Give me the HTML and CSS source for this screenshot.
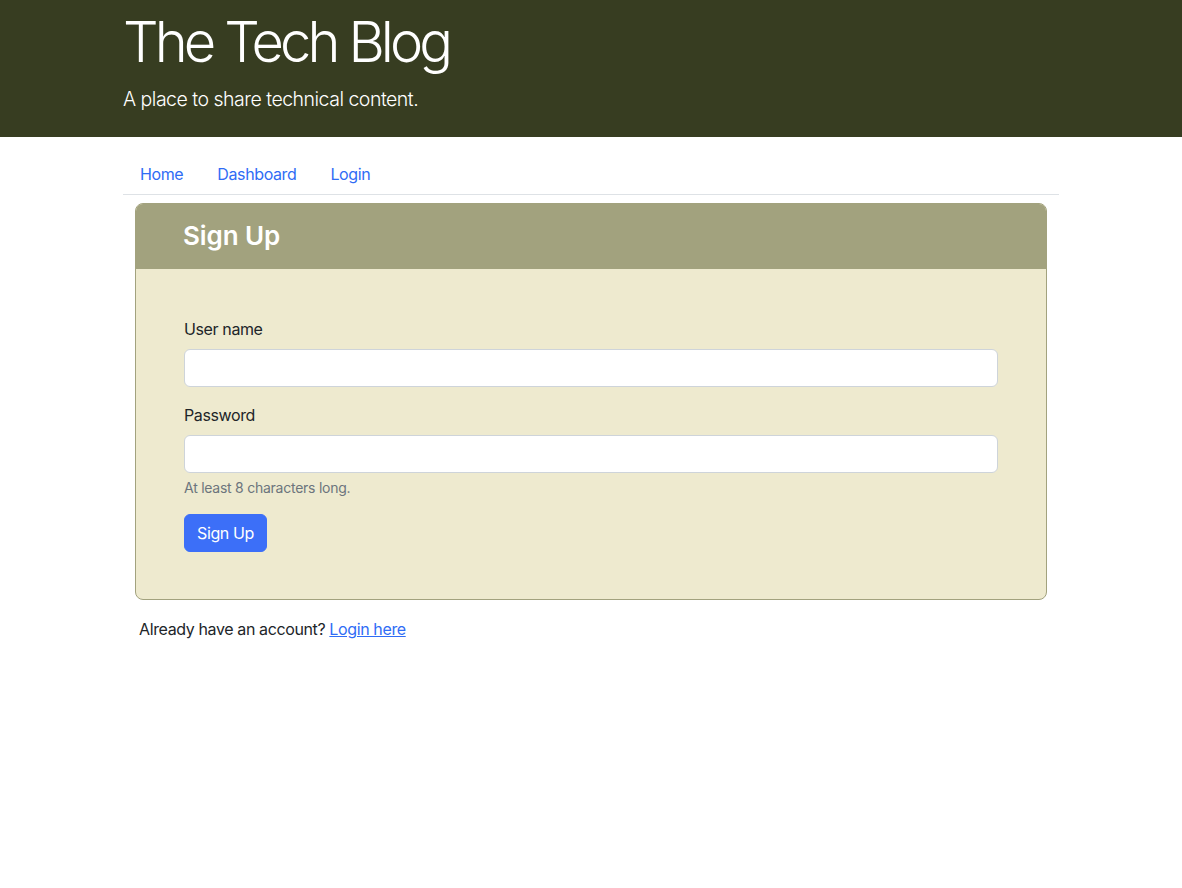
FILE: index.html
```html
<!DOCTYPE html>
<html lang="en">
<head>
<meta charset="utf-8">
<title>The Tech Blog</title>
<link rel="stylesheet" href="styles.css">
</head>
<body>
<header class="hero">
  <div class="container">
    <h1 class="hero-title">The Tech Blog</h1>
    <p class="hero-lead">A place to share technical content.</p>
  </div>
</header>
<main class="container">
  <nav class="nav">
    <a class="nav-link" href="#">Home</a>
    <a class="nav-link" href="#">Dashboard</a>
    <a class="nav-link" href="#">Login</a>
  </nav>
  <section class="card">
    <div class="card-header"><h2 class="card-title">Sign Up</h2></div>
    <form class="card-body">
      <div class="field">
        <label class="label" for="username">User name</label>
        <input class="input" id="username" type="text">
      </div>
      <div class="field">
        <label class="label" for="password">Password</label>
        <input class="input" id="password" type="password">
        <div class="hint">At least 8 characters long.</div>
      </div>
      <button class="btn" type="button">Sign Up</button>
    </form>
  </section>
  <p class="alt">Already have an account? <a class="alt-link" href="#">Login here</a></p>
</main>
</body>
</html>
```
FILE: styles.css
```css
* { box-sizing: border-box; }
body {
  margin: 0;
  font-family: Inter, "Noto Sans", sans-serif;
  font-size: 16px;
  line-height: 1.5;
  letter-spacing: -0.38px;
  color: #212529;
  background: #fff;
}
.container {
  width: 960px;
  margin: 0 auto;
  padding: 0 12px;
}
.hero {
  background: #373d21;
  color: #fff;
  height: 137px;
  padding-top: 9px;
}
.hero-title {
  margin: 0;
  font-size: 56px;
  font-weight: 300;
  line-height: 1.2;
  letter-spacing: -3.9px;
}
.hero-lead {
  margin: 9px 0 0;
  font-size: 19.5px;
  font-weight: 300;
  line-height: 1.5;
  letter-spacing: -0.5px;
}
.nav {
  display: flex;
  margin-top: 17px;
  border-bottom: 1px solid #dee2e6;
}
.nav-link {
  display: block;
  padding: 8px 17px;
  color: #2f6cf5;
  text-decoration: none;
}
.card {
  margin: 8px 12px 0;
  background: #eeeacf;
  border: 1px solid #a2a27e;
  border-radius: 8px;
  overflow: hidden;
}
.card-header {
  background: #a2a27e;
  padding: 16px 47px;
  height: 65px;
}
.card-title {
  margin: 0;
  color: #fff;
  font-size: 26px;
  font-weight: 600;
  line-height: 1.2;
  letter-spacing: -0.1px;
}
.card-body {
  padding: 48px 48px 47px;
}
.field { margin-bottom: 16px; }
.label {
  display: block;
  margin-bottom: 8px;
}
.input {
  display: block;
  width: 100%;
  height: 38px;
  padding: 6px 12px;
  font: inherit;
  background: #fff;
  border: 1px solid #ced4da;
  border-radius: 6px;
}
.hint {
  margin-top: 4px;
  font-size: 14px;
  line-height: 1.5;
  color: #6c757d;
  letter-spacing: -0.25px;
}
.btn {
  display: block;
  height: 38px;
  padding: 6px 12px;
  font: inherit;
  letter-spacing: -0.38px;
  color: #fff;
  background: #3c6ff8;
  border: 1px solid #3c6ff8;
  border-radius: 6px;
}
.alt {
  margin: 17px 0 0;
  padding: 0 16px;
}
.alt-link { color: #2f6cf5; }
```
